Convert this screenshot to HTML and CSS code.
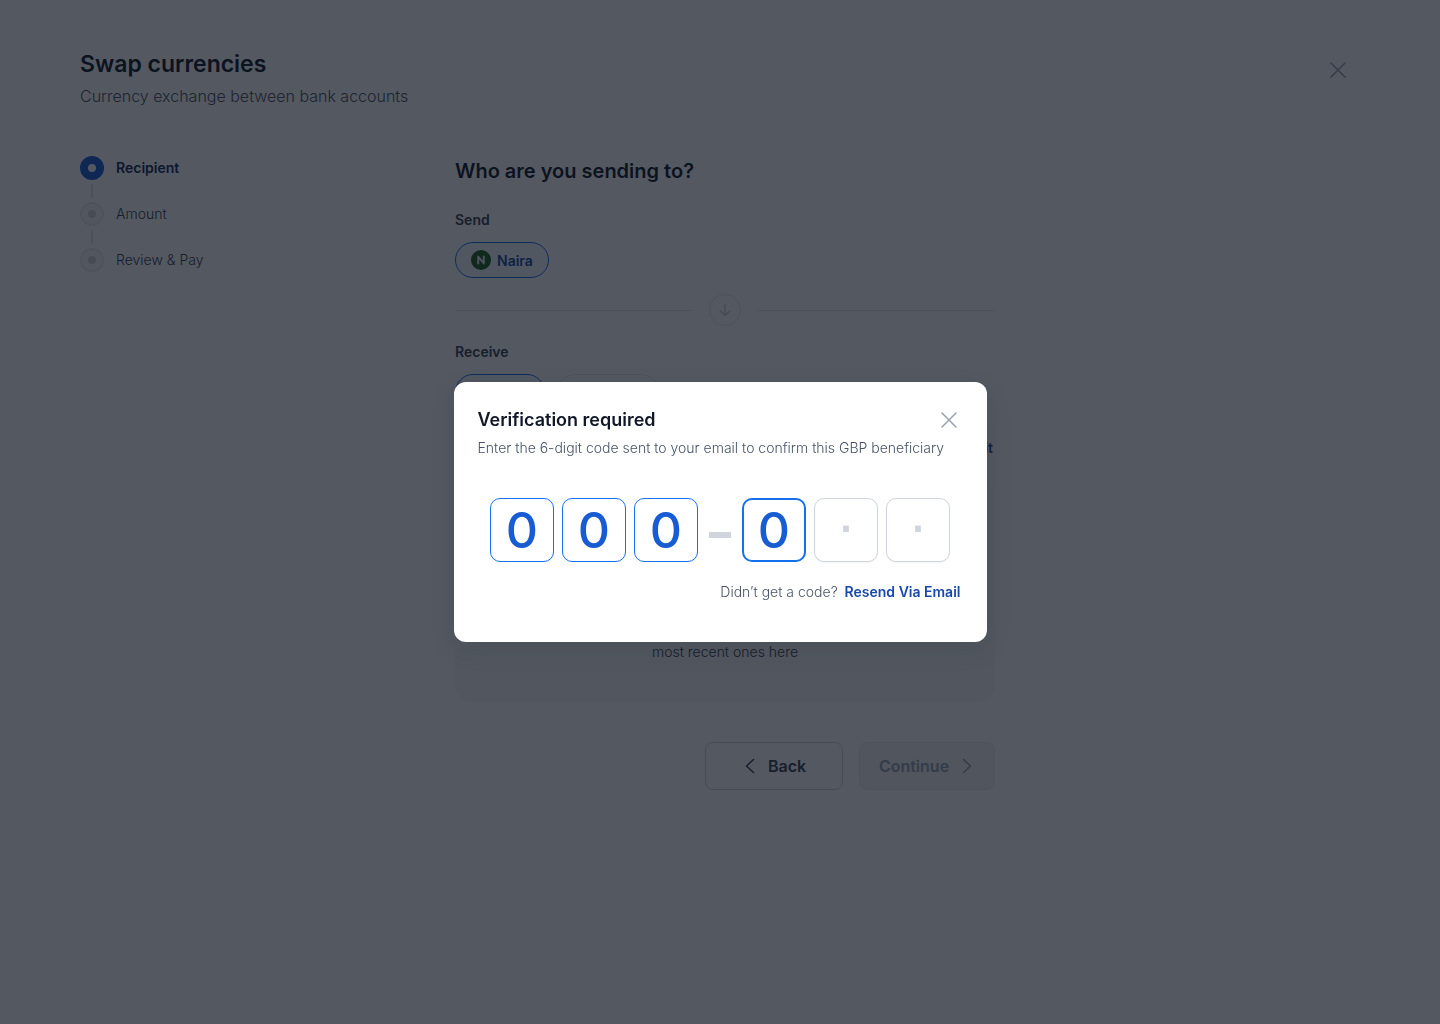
FILE: index.html
```html
<!DOCTYPE html>
<html lang="en">
<head>
    <meta charset="UTF-8">
    <meta name="viewport" content="width=device-width, initial-scale=1.0">
    <title>Swap currencies</title>
    <link rel="stylesheet" href="styles.css">
</head>
<body>
    <header class="header">
        <div>
            <h1>Swap currencies</h1>
            <p class="subtitle">Currency exchange between bank accounts</p>
        </div>
        <button class="icon-button" type="button" aria-label="Close">
            <svg width="24" height="24" viewBox="0 0 24 24" fill="none" stroke="currentColor" stroke-width="1.5" stroke-linecap="round"><path d="M5 5l14 14M19 5L5 19"/></svg>
        </button>
    </header>

    <main class="main">
        <ol class="steps">
            <li class="step active"><span class="dot"></span>Recipient</li>
            <li class="step"><span class="dot"></span>Amount</li>
            <li class="step"><span class="dot"></span>Review &amp; Pay</li>
        </ol>

        <section class="content">
            <h2>Who are you sending to?</h2>

            <h3>Send</h3>
            <div class="pills">
                <button class="pill selected" type="button">
                    <svg width="20" height="20" viewBox="0 0 20 20" fill="none"><circle cx="10" cy="10" r="10" fill="#1b5e20"/><path d="M7.2 13.4V6.6l5.6 6.8V6.6" stroke="#e4e7ec" stroke-width="2" stroke-linecap="round" stroke-linejoin="round"/></svg>
                    Naira
                </button>
            </div>

            <div class="divider">
                <span class="divider-icon">
                    <svg width="16" height="16" viewBox="0 0 16 16" fill="none" stroke="currentColor" stroke-width="1.5" stroke-linecap="round" stroke-linejoin="round"><path d="M8 2.5v11M3.2 9L8 13.5 12.8 9"/></svg>
                </span>
            </div>

            <h3>Receive</h3>
            <div class="pills">
                <button class="pill selected" type="button">Pounds</button>
                <button class="pill wide" type="button">US Dollar</button>
            </div>

            <div class="recipients-head">
                <a href="#">Edit</a>
            </div>
            <div class="recipients">
                <p>most recent ones here</p>
            </div>

            <div class="actions">
                <button class="button back" type="button">
                    <svg width="24" height="24" viewBox="0 0 24 24" fill="none" stroke="currentColor" stroke-width="1.5" stroke-linecap="round" stroke-linejoin="round"><path d="M15.5 5.5L8.5 12l7 6.5"/></svg>
                    Back
                </button>
                <button class="button continue" type="button" disabled>
                    Continue
                    <svg width="24" height="24" viewBox="0 0 24 24" fill="none" stroke="currentColor" stroke-width="1.5" stroke-linecap="round" stroke-linejoin="round"><path d="M8.5 5.5l7 6.5-7 6.5"/></svg>
                </button>
            </div>
        </section>
    </main>

    <div class="overlay">
        <div class="modal" role="dialog" aria-labelledby="modalTitle">
            <div class="modal-head">
                <div>
                    <h2 id="modalTitle">Verification required</h2>
                    <p>Enter the 6-digit code sent to your email to confirm this GBP beneficiary</p>
                </div>
                <button class="icon-button" type="button" aria-label="Close dialog">
                    <svg width="24" height="24" viewBox="0 0 24 24" fill="none" stroke="currentColor" stroke-width="1.5" stroke-linecap="round"><path d="M5 5l14 14M19 5L5 19"/></svg>
                </button>
            </div>
            <form class="code">
                <input type="text" maxlength="1" value="0" placeholder="·" aria-label="Digit 1">
                <input type="text" maxlength="1" value="0" placeholder="·" aria-label="Digit 2">
                <input type="text" maxlength="1" value="0" placeholder="·" aria-label="Digit 3">
                <span class="dash"></span>
                <input class="current" type="text" maxlength="1" value="0" placeholder="·" aria-label="Digit 4">
                <input type="text" maxlength="1" placeholder="·" aria-label="Digit 5">
                <input type="text" maxlength="1" placeholder="·" aria-label="Digit 6">
            </form>
            <p class="resend">Didn’t get a code? <a href="#">Resend Via Email</a></p>
        </div>
    </div>
</body>
</html>
```
FILE: styles.css
```css
* {
    box-sizing: border-box;
}

body {
    margin: 0;
    min-height: 100vh;
    background: #fff;
    color: #101828;
    font-family: Inter, "Liberation Sans", sans-serif;
    font-size: 14px;
    font-weight: 300;
    line-height: 20px;
}

h1, h2, h3, p, ol {
    margin: 0;
    padding: 0;
}

button {
    font-family: inherit;
    cursor: pointer;
}

a {
    color: #1849a9;
    font-weight: 600;
    text-decoration: none;
}

.header {
    display: flex;
    justify-content: space-between;
    align-items: flex-start;
    padding: 48px 80px;
}

h1 {
    font-size: 23px;
    line-height: 32px;
    font-weight: 600;
}

.subtitle {
    margin-top: 4px;
    font-size: 16px;
    line-height: 24px;
    color: #475467;
}

.icon-button {
    display: flex;
    align-items: center;
    justify-content: center;
    width: 44px;
    height: 44px;
    padding: 0;
    border: none;
    background: none;
    color: #98a2b3;
}

.main {
    display: grid;
    grid-template-columns: 1fr 540px 1fr;
    padding: 0 70px 48px 80px;
}

.steps {
    display: flex;
    flex-direction: column;
    gap: 22px;
    list-style: none;
}

.step {
    position: relative;
    display: flex;
    align-items: center;
    gap: 12px;
    height: 24px;
    color: #344054;
}

/* connector to the next step */
.step:not(:last-child)::after {
    content: "";
    position: absolute;
    left: 11px;
    top: 28px;
    width: 2px;
    height: 14px;
    background: #e4e7ec;
}

.dot {
    display: flex;
    align-items: center;
    justify-content: center;
    width: 24px;
    height: 24px;
    border: 2px solid #eaecf0;
    border-radius: 50%;
    background: #f9fafb;
}

.dot::before {
    content: "";
    width: 8px;
    height: 8px;
    border-radius: 50%;
    background: #d0d5dd;
}

.step.active {
    color: #102a56;
    font-weight: 600;
}

.step.active .dot {
    border-color: #175cd3;
    background: #175cd3;
}

.step.active .dot::before {
    background: #fff;
}

.content h2 {
    margin-bottom: 24px;
    font-size: 20px;
    line-height: 30px;
    font-weight: 600;
}

h3 {
    margin-bottom: 12px;
    font-size: 14px;
    line-height: 20px;
    font-weight: 600;
    color: #344054;
}

.pills {
    display: flex;
    gap: 12px;
}

.pill {
    display: flex;
    align-items: center;
    justify-content: center;
    gap: 6px;
    min-width: 90px;
    height: 36px;
    padding: 0 15px;
    border: 1px solid #e4e7ec;
    border-radius: 18px;
    background: #fff;
    color: #344054;
    font-size: 14px;
    font-weight: 600;
}

.pill.wide {
    min-width: 102px;
}

.pill.selected {
    border-color: #1570ef;
    background: #f5faff;
    color: #1849a9;
}

.divider {
    display: flex;
    align-items: center;
    gap: 16px;
    margin: 16px 0;
}

.divider::before, .divider::after {
    content: "";
    flex: 1;
    height: 1px;
    background: #e4e7ec;
}

.divider-icon {
    display: flex;
    align-items: center;
    justify-content: center;
    width: 32px;
    height: 32px;
    border: 1px solid #e4e7ec;
    border-radius: 50%;
    color: #d0d5dd;
}

.recipients-head {
    display: flex;
    justify-content: flex-end;
    margin: 28px 2px 24px;
}

.recipients {
    display: flex;
    align-items: flex-end;
    justify-content: center;
    height: 220px;
    padding-bottom: 40px;
    border-radius: 16px;
    background: #f9fafb;
    color: #344054;
}

.actions {
    display: flex;
    justify-content: flex-end;
    gap: 16px;
    margin-top: 40px;
}

.button {
    display: flex;
    align-items: center;
    justify-content: center;
    gap: 6px;
    width: 136px;
    height: 48px;
    padding: 0;
    border: 1px solid #d0d5dd;
    border-radius: 8px;
    background: #fff;
    color: #344054;
    font-size: 16px;
    font-weight: 600;
}

.back {
    width: 138px;
    padding-right: 4px;
}

.continue {
    padding-left: 4px;
}

.button:disabled {
    border-color: #eaecf0;
    background: #f2f4f7;
    color: #98a2b3;
}

.overlay {
    position: fixed;
    inset: 0;
    display: flex;
    align-items: center;
    justify-content: center;
    background: rgba(12, 17, 29, 0.7);
}

.modal {
    width: 533px;
    max-width: 100%;
    padding: 24px 24px 40px;
    border-radius: 12px;
    background: #fff;
    box-shadow: 0 8px 24px rgba(16, 24, 40, 0.12);
}

.modal-head {
    position: relative;
    margin-bottom: 40px;
}

.modal-head h2 {
    font-size: 18px;
    line-height: 28px;
    font-weight: 600;
}

.modal-head p {
    margin-top: 4px;
    color: #475467;
}

.modal-head .icon-button {
    position: absolute;
    top: -8px;
    right: -8px;
}

.code {
    display: flex;
    align-items: center;
    justify-content: center;
    gap: 8px;
}

.code input {
    width: 64px;
    height: 64px;
    padding: 0;
    border: 1px solid #1570ef;
    border-radius: 10px;
    background: #fff;
    color: #175cd3;
    font-family: inherit;
    font-size: 50px;
    font-weight: 500;
    text-align: center;
}

.code input:placeholder-shown {
    padding-bottom: 12px;
    border-color: #d0d5dd;
    box-shadow: 0 1px 2px rgba(16, 24, 40, 0.05);
    font-family: "Liberation Sans", sans-serif;
    font-size: 60px;
}

.code input::placeholder {
    color: #d0d5dd;
    opacity: 1;
}

.code .current {
    border-width: 2px;
}

.dash {
    width: 28px;
    height: 6px;
    margin-top: 10px;
    border: solid #fff;
    border-width: 0 3px;
    background: #d0d5dd;
}

.resend {
    margin: 20px 2px 0 0;
    text-align: right;
    color: #475467;
}

.resend a {
    margin-left: 3px;
}
```
